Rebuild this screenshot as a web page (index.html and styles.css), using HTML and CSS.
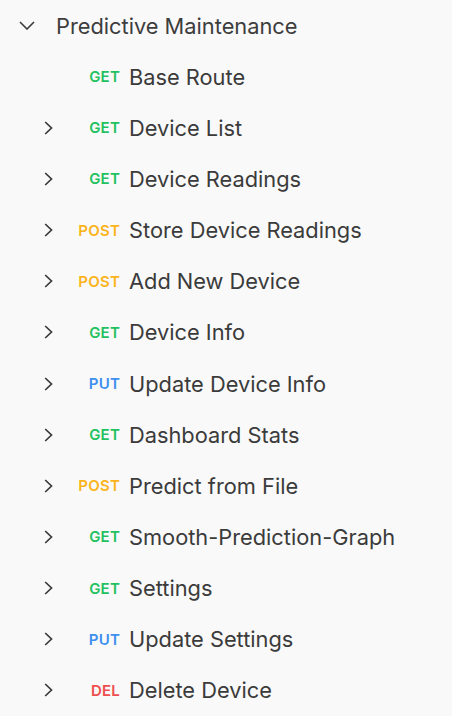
FILE: index.html
```html
<!DOCTYPE html>
<html>
<head>
<meta charset="utf-8">
<link rel="stylesheet" href="styles.css">
</head>
<body>
<div class="tree">
  <div class="row folder">
    <span class="chev-down"><svg width="16" height="9" viewBox="0 0 16 9"><path d="M1 1 L8 8 L15 1" fill="none" stroke="#3a3a3a" stroke-width="1.6"/></svg></span>
    <span class="folder-name">Predictive Maintenance</span>
  </div>
  <div class="row req">
    <span class="chev"></span>
    <span class="method get">GET</span>
    <span class="name">Base Route</span>
  </div>
  <div class="row req">
    <span class="chev"><svg width="9" height="14" viewBox="0 0 9 14"><path d="M1.2 1 L7.5 7 L1.2 13" fill="none" stroke="#3a3a3a" stroke-width="1.7"/></svg></span>
    <span class="method get">GET</span>
    <span class="name">Device List</span>
  </div>
  <div class="row req">
    <span class="chev"><svg width="9" height="14" viewBox="0 0 9 14"><path d="M1.2 1 L7.5 7 L1.2 13" fill="none" stroke="#3a3a3a" stroke-width="1.7"/></svg></span>
    <span class="method get">GET</span>
    <span class="name">Device Readings</span>
  </div>
  <div class="row req">
    <span class="chev"><svg width="9" height="14" viewBox="0 0 9 14"><path d="M1.2 1 L7.5 7 L1.2 13" fill="none" stroke="#3a3a3a" stroke-width="1.7"/></svg></span>
    <span class="method post">POST</span>
    <span class="name">Store Device Readings</span>
  </div>
  <div class="row req">
    <span class="chev"><svg width="9" height="14" viewBox="0 0 9 14"><path d="M1.2 1 L7.5 7 L1.2 13" fill="none" stroke="#3a3a3a" stroke-width="1.7"/></svg></span>
    <span class="method post">POST</span>
    <span class="name">Add New Device</span>
  </div>
  <div class="row req">
    <span class="chev"><svg width="9" height="14" viewBox="0 0 9 14"><path d="M1.2 1 L7.5 7 L1.2 13" fill="none" stroke="#3a3a3a" stroke-width="1.7"/></svg></span>
    <span class="method get">GET</span>
    <span class="name">Device Info</span>
  </div>
  <div class="row req">
    <span class="chev"><svg width="9" height="14" viewBox="0 0 9 14"><path d="M1.2 1 L7.5 7 L1.2 13" fill="none" stroke="#3a3a3a" stroke-width="1.7"/></svg></span>
    <span class="method put">PUT</span>
    <span class="name">Update Device Info</span>
  </div>
  <div class="row req">
    <span class="chev"><svg width="9" height="14" viewBox="0 0 9 14"><path d="M1.2 1 L7.5 7 L1.2 13" fill="none" stroke="#3a3a3a" stroke-width="1.7"/></svg></span>
    <span class="method get">GET</span>
    <span class="name">Dashboard Stats</span>
  </div>
  <div class="row req">
    <span class="chev"><svg width="9" height="14" viewBox="0 0 9 14"><path d="M1.2 1 L7.5 7 L1.2 13" fill="none" stroke="#3a3a3a" stroke-width="1.7"/></svg></span>
    <span class="method post">POST</span>
    <span class="name">Predict from File</span>
  </div>
  <div class="row req">
    <span class="chev"><svg width="9" height="14" viewBox="0 0 9 14"><path d="M1.2 1 L7.5 7 L1.2 13" fill="none" stroke="#3a3a3a" stroke-width="1.7"/></svg></span>
    <span class="method get">GET</span>
    <span class="name">Smooth-Prediction-Graph</span>
  </div>
  <div class="row req">
    <span class="chev"><svg width="9" height="14" viewBox="0 0 9 14"><path d="M1.2 1 L7.5 7 L1.2 13" fill="none" stroke="#3a3a3a" stroke-width="1.7"/></svg></span>
    <span class="method get">GET</span>
    <span class="name">Settings</span>
  </div>
  <div class="row req">
    <span class="chev"><svg width="9" height="14" viewBox="0 0 9 14"><path d="M1.2 1 L7.5 7 L1.2 13" fill="none" stroke="#3a3a3a" stroke-width="1.7"/></svg></span>
    <span class="method put">PUT</span>
    <span class="name">Update Settings</span>
  </div>
  <div class="row req">
    <span class="chev"><svg width="9" height="14" viewBox="0 0 9 14"><path d="M1.2 1 L7.5 7 L1.2 13" fill="none" stroke="#3a3a3a" stroke-width="1.7"/></svg></span>
    <span class="method del">DEL</span>
    <span class="name">Delete Device</span>
  </div>
</div>
</body>
</html>
```
FILE: styles.css
```css
html, body {
  margin: 0;
  padding: 0;
  background: #f9f9f9;
}
body {
  font-family: Inter, "Noto Sans", sans-serif;
  color: #3b3b3b;
  width: 452px;
  height: 716px;
  overflow: hidden;
}
.tree {
  display: flex;
  flex-direction: column;
}
.row {
  display: flex;
  align-items: center;
  height: 51.15px;
}
.folder {
  padding-left: 19px;
}
.chev-down {
  width: 16px;
  display: flex;
  align-items: center;
  margin-right: 21px;
}
.folder-name {
  font-size: 21.8px;
  color: #3d3d3d;
}
.req {
  padding-left: 44px;
}
.chev {
  width: 9px;
  height: 14px;
  display: flex;
  align-items: center;
}
.method {
  width: 67px;
  text-align: right;
  font-size: 15px;
  font-weight: 600;
  letter-spacing: 0.2px;
}
.get { color: #1fc160; }
.post { color: #fbb41a; }
.put { color: #3d8ff0; }
.del { color: #ee4e4e; }
.name {
  margin-left: 9px;
  font-size: 21.8px;
  color: #3b3b3b;
}
```
